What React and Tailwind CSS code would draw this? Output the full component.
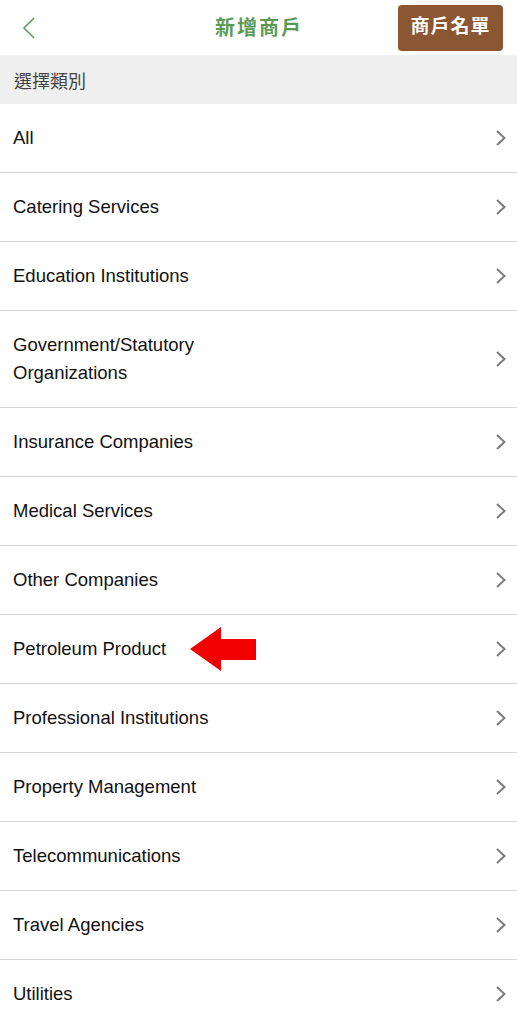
const categories = [
  'All',
  'Catering Services',
  'Education Institutions',
  'Government/Statutory Organizations',
  'Insurance Companies',
  'Medical Services',
  'Other Companies',
  'Petroleum Product',
  'Professional Institutions',
  'Property Management',
  'Telecommunications',
  'Travel Agencies',
  'Utilities',
]

const font = { fontFamily: '"Liberation Sans", "Noto Sans CJK TC", sans-serif' }

function RedArrow() {
  return (
    <svg width="66" height="44" viewBox="0 0 66 44" className="ml-[24px] shrink-0">
      <polygon points="0,22 31,0 31,12 66,12 66,33 31,33 31,44" fill="#f20000" />
    </svg>
  )
}

function Chevron() {
  return (
    <svg width="12" height="18" viewBox="0 0 12 18" className="shrink-0">
      <polyline points="2,2 9.5,9 2,16" fill="none" stroke="#7c7c7c" strokeWidth="2" />
    </svg>
  )
}

export default function App() {
  return (
    <div className="w-[517px] h-[1024px] overflow-hidden bg-white" style={font}>
      {/* Header */}
      <div className="h-[55px] flex items-center pl-[4px] bg-white">
        <button className="w-[50px] h-[50px] flex items-center justify-center">
          <svg width="14" height="22" viewBox="0 0 14 22">
            <polyline points="12,1 2,11 12,21" fill="none" stroke="#5e9d5a" strokeWidth="1.6" />
          </svg>
        </button>
        <h1 className="flex-1 text-center text-[20px] text-[#5a9a52] font-bold tracking-[2px] pl-[66px]">
          新增商戶
        </h1>
        <button className="w-[105px] h-[46px] mr-[14px] rounded-[4px] bg-[#8b5632] text-white text-[19px] font-bold tracking-[1px]">
          商戶名單
        </button>
      </div>

      {/* Section title */}
      <div className="h-[49px] bg-[#efefef] flex items-center pt-[5px] px-[14px] text-[18px] text-[#444]">
        選擇類別
      </div>

      {/* List */}
      <ul>
        {categories.map((name) => (
          <li
            key={name}
            className={`flex items-center border-b border-[#d6d6d6] pl-[13px] pr-[10px] ${
              name.length > 30 ? 'h-[97px]' : 'h-[69px]'
            }`}
          >
            <div className="flex-1 flex items-center">
              <span className={`text-[18.5px] text-[#111] leading-[28px] ${name.length > 30 ? 'w-[200px]' : ''}`}>
                {name}
              </span>
              {name === 'Petroleum Product' && <RedArrow />}
            </div>
            <Chevron />
          </li>
        ))}
      </ul>
    </div>
  )
}
